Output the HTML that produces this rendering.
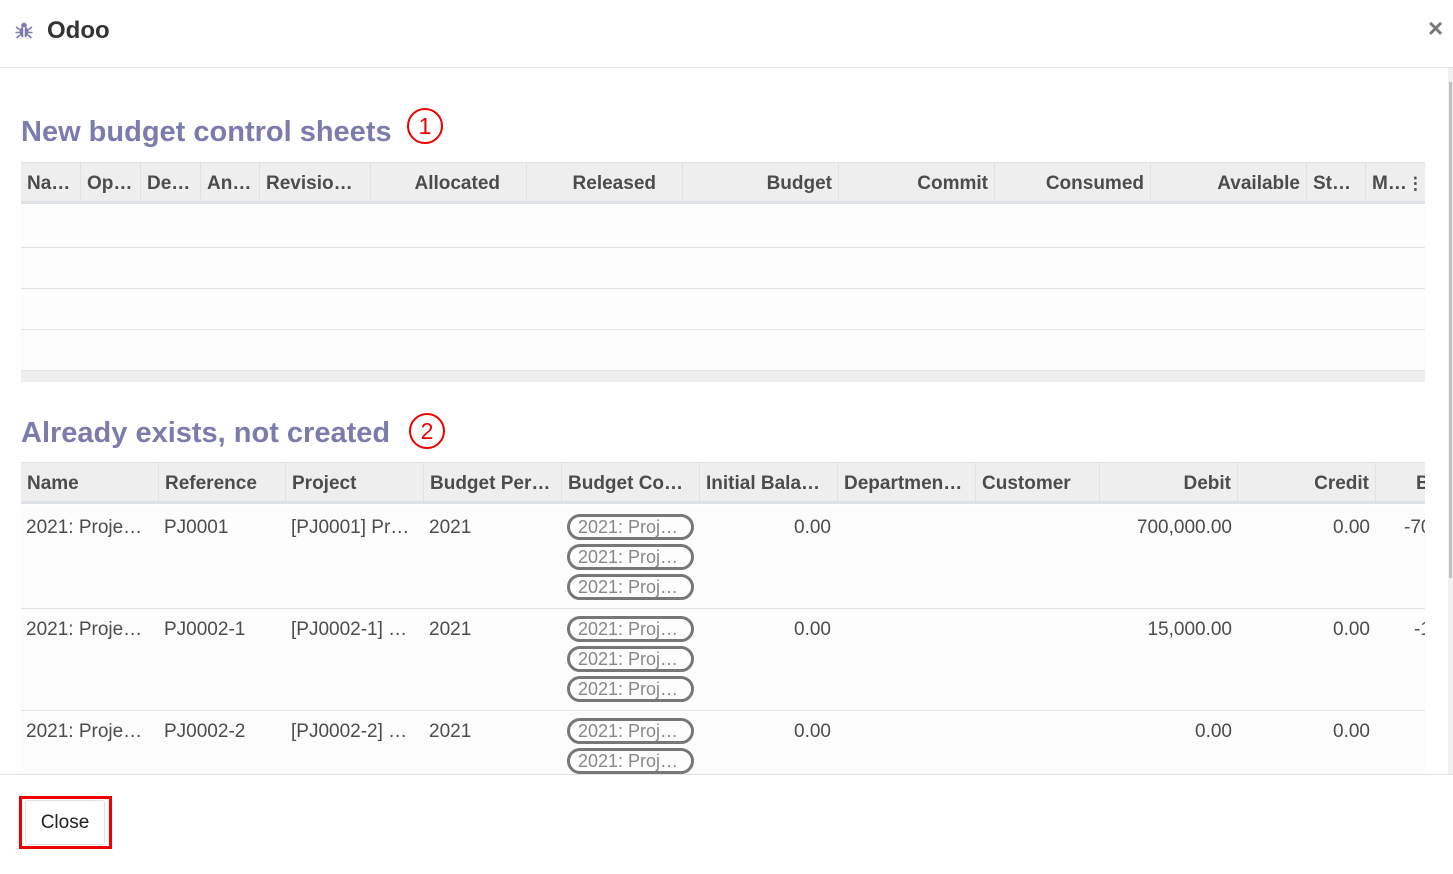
<!DOCTYPE html>
<html><head><meta charset="utf-8"><style>
*{box-sizing:border-box;margin:0;padding:0}
body{width:1453px;height:874px;overflow:hidden;background:#fff;font-family:"Liberation Sans",sans-serif;position:relative;color:#4c4c4c}
.a{position:absolute}
.hd{position:absolute;height:42px;background:#eee;border-top:1px solid #dee2e6;border-bottom:3px solid #dee2e6;display:flex}
.hd div{height:39px;line-height:41px;font-weight:bold;font-size:19px;padding:0 6px;border-right:1px solid #dee2e6;white-space:nowrap;overflow:hidden;flex:none}
.r{text-align:right}
.row{position:absolute;left:21px;width:1404px;background:#fcfcfc;border-bottom:1px solid #e2e2e2}
.cell{position:absolute;font-size:19px;top:10px;white-space:nowrap}
.tag{position:absolute;left:567px;width:127px;height:26px;border:3px solid #777;border-radius:13px;color:#888;font-size:18px;line-height:20px;padding-left:8px;white-space:nowrap}
.title{position:absolute;left:21px;font-size:29px;font-weight:bold;color:#7c7bad}
.circ{position:absolute;width:36px;height:36px;border:2px solid #e00;border-radius:50%;color:#e00;font-size:23px;text-align:center;line-height:32px}
</style></head><body>
<svg class="a" style="left:14px;top:20px" width="20" height="20" viewBox="0 0 20 20"><g fill="#7c7bad"><ellipse cx="10" cy="12" rx="4.5" ry="5.5"/><circle cx="10" cy="5.5" r="2.8"/><path d="M2 7l4 3M18 7l-4 3M1.5 12.5h4M18.5 12.5h-4M2.5 18l3.5-3M17.5 18l-3.5-3" stroke="#7c7bad" stroke-width="1.6" fill="none"/></g><rect x="9.3" y="7" width="1.4" height="11" fill="#fff"/></svg>
<div class="a" style="left:47px;top:17px;font-size:24px;font-weight:bold;color:#333">Odoo</div>
<div class="a" style="left:1428px;top:13px;font-size:26px;font-weight:bold;color:#777">×</div>
<div class="a" style="left:0;top:67px;width:1453px;height:1px;background:#dee2e6"></div>
<div class="a" style="left:1448px;top:68px;width:5px;height:706px;background:#f1f1f1"></div>
<div class="a" style="left:1449px;top:82px;width:3px;height:496px;background:#c1c1c1"></div>

<div class="title" style="top:116px">New budget control sheets</div>
<div class="circ" style="left:407px;top:108px">1</div>
<div class="hd" style="left:21px;top:162px;width:1404px">
<div style="width:60px">Na…</div><div style="width:60px">Op…</div><div style="width:60px">De…</div><div style="width:59px">An…</div><div style="width:111px">Revisio…</div>
<div class="r" style="width:156px;padding-right:26px">Allocated</div><div class="r" style="width:156px;padding-right:26px">Released</div><div class="r" style="width:156px">Budget</div><div class="r" style="width:156px">Commit</div><div class="r" style="width:156px">Consumed</div><div class="r" style="width:156px">Available</div><div style="width:59px">St…</div><div style="width:59px;border-right:none">M…<span style="font-size:17px">⋮</span></div>
</div>
<div class="row" style="top:207px;height:41px"></div>
<div class="row" style="top:248px;height:41px"></div>
<div class="row" style="top:289px;height:41px"></div>
<div class="row" style="top:330px;height:41px"></div>
<div class="a" style="left:21px;top:371px;width:1404px;height:11px;background:#eee"></div>

<div class="title" style="top:417px">Already exists, not created</div>
<div class="circ" style="left:409px;top:413px">2</div>
<div class="hd" style="left:21px;top:462px;width:1404px;overflow:hidden">
<div style="width:138px">Name</div><div style="width:127px">Reference</div><div style="width:138px">Project</div><div style="width:138px">Budget Per…</div><div style="width:138px">Budget Co…</div><div style="width:138px">Initial Bala…</div><div style="width:138px">Departmen…</div><div style="width:124px">Customer</div><div class="r" style="width:138px">Debit</div><div class="r" style="width:138px">Credit</div><div style="width:60px;padding-left:40px">B</div>
</div>
<div style="position:absolute;left:0;top:0;width:1425px;height:774px;overflow:hidden">
<div class="row" style="top:507px;height:102px">
<div class="cell" style="left:5px">2021: Proje…</div><div class="cell" style="left:143px">PJ0001</div><div class="cell" style="left:270px">[PJ0001] Pr…</div><div class="cell" style="left:408px">2021</div><div class="cell" style="left:773px">0.00</div><div class="cell" style="right:193px">700,000.00</div><div class="cell" style="right:55px">0.00</div><div class="cell" style="left:1383px">-70</div></div>
<div class="tag" style="top:514px">2021: Proj…</div><div class="tag" style="top:544px">2021: Proj…</div><div class="tag" style="top:574px">2021: Proj…</div>
<div class="row" style="top:609px;height:102px">
<div class="cell" style="left:5px">2021: Proje…</div><div class="cell" style="left:143px">PJ0002-1</div><div class="cell" style="left:270px">[PJ0002-1] …</div><div class="cell" style="left:408px">2021</div><div class="cell" style="left:773px">0.00</div><div class="cell" style="right:193px">15,000.00</div><div class="cell" style="right:55px">0.00</div><div class="cell" style="left:1393px">-1</div></div>
<div class="tag" style="top:616px">2021: Proj…</div><div class="tag" style="top:646px">2021: Proj…</div><div class="tag" style="top:676px">2021: Proj…</div>
<div class="row" style="top:711px;height:102px">
<div class="cell" style="left:5px">2021: Proje…</div><div class="cell" style="left:143px">PJ0002-2</div><div class="cell" style="left:270px">[PJ0002-2] …</div><div class="cell" style="left:408px">2021</div><div class="cell" style="left:773px">0.00</div><div class="cell" style="right:193px">0.00</div><div class="cell" style="right:55px">0.00</div></div>
<div class="tag" style="top:718px">2021: Proj…</div><div class="tag" style="top:748px">2021: Proj…</div>
</div>
<div class="a" style="left:0;top:774px;width:1453px;height:1px;background:#dee2e6"></div>
<div class="a" style="left:19px;top:796px;width:93px;height:53px;border:3px solid #e00"></div>
<div class="a" style="left:25px;top:800px;width:80px;height:45px;border:1px solid #dee2e6;border-radius:3px;font-size:19px;color:#222;text-align:center;line-height:44px">Close</div>
</body></html>
